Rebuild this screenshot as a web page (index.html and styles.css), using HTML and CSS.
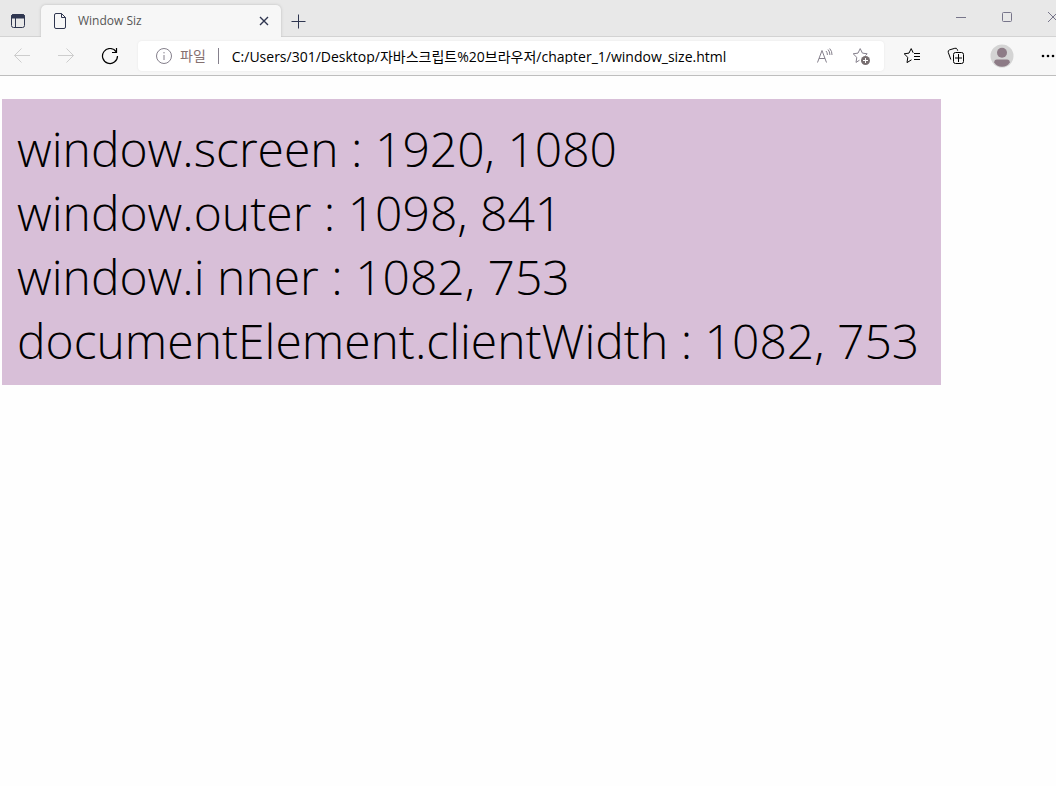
FILE: index.html
```
<!DOCTYPE html>
<html lang="ko">
<head>
  <meta charset="UTF-8">
  <meta name="viewport" content="width=device-width, initial-scale=1.0">
  <title>Window Size</title>
  <link rel="stylesheet" href="styles.css">
</head>
<body>
  <header class="browser">
    <!-- tab strip -->
    <div class="tab-strip">
      <button class="tab-menu" aria-label="Tab actions">
        <svg width="16" height="16" viewBox="0 0 16 16"><rect x="1.5" y="1.5" width="13" height="13" rx="2"/><path d="M1.5 3.5a2 2 0 0 1 2-2h9a2 2 0 0 1 2 2V5h-13z" class="solid"/><path d="M5.5 5v9.5"/></svg>
      </button>
      <div class="tab">
        <svg width="14" height="18" viewBox="0 0 14 18"><path d="M3 1.5h5.5l4 4V15a1.5 1.5 0 0 1-1.5 1.5H3A1.5 1.5 0 0 1 1.5 15V3A1.5 1.5 0 0 1 3 1.5zM8.5 1.5v4h4"/></svg>
        <span class="tab-title">Window Siz</span>
        <button class="tab-close" aria-label="Close tab">
          <svg width="10" height="10" viewBox="0 0 10 10"><path d="M1 1l8 8M9 1L1 9"/></svg>
        </button>
      </div>
      <button class="tab-new" aria-label="New tab">
        <svg width="15" height="15" viewBox="0 0 15 15"><path d="M7.5 .5v14M.5 7.5h14"/></svg>
      </button>
      <div class="window-buttons">
        <button aria-label="Minimize"><svg width="12" height="12" viewBox="0 0 12 12"><path d="M1 6.5h10"/></svg></button>
        <button aria-label="Maximize"><svg width="12" height="12" viewBox="0 0 12 12"><rect x="1.5" y="1.5" width="9" height="9" rx="1"/></svg></button>
        <button aria-label="Close"><svg width="12" height="12" viewBox="0 0 12 12"><path d="M1 1l10 10M11 1L1 11"/></svg></button>
      </div>
    </div>

    <!-- toolbar -->
    <div class="toolbar">
      <button class="tool" aria-label="Back" disabled>
        <svg width="18" height="16" viewBox="0 0 18 16"><path d="M8.5 .5l-7 7 7 7M1.5 7.5H17"/></svg>
      </button>
      <button class="tool" aria-label="Forward" disabled>
        <svg width="18" height="16" viewBox="0 0 18 16"><path d="M9.5 .5l7 7-7 7M16.5 7.5H1"/></svg>
      </button>
      <button class="tool" aria-label="Refresh">
        <svg width="18" height="18" viewBox="0 0 18 18" class="refresh"><path d="M15.2 4.8A7.5 7.5 0 1 0 16.5 9M15.5 1v4.5H11"/></svg>
      </button>
      <div class="address-bar">
        <svg width="18" height="18" viewBox="0 0 18 18"><circle cx="9" cy="9" r="7.5"/><path d="M9 8v5M9 5v1.4"/></svg>
        <label class="scheme" for="address">파일</label>
        <input type="text" id="address" value="C:/Users/301/Desktop/자바스크립트%20브라우저/chapter_1/window_size.html">
        <button aria-label="Read aloud">
          <svg width="18" height="18" viewBox="0 0 18 18"><path d="M1.5 15.5l4.500-12 4.500 12M3 11.500h6M10 4q1.500 1.500 1.400 4M12 2.500q2 2.200 1.900 5.500M13.700 1.500q2.500 2.700 2.300 6.500"/></svg>
        </button>
        <button aria-label="Add to favorites">
          <svg width="18" height="18" viewBox="0 0 18 18"><path d="M7.5 13.200L4 15.400l.8-5L1.200 6.800l4.800-.7L8.200 1.600l2.200 4.500 4.800.7-1.800 1.700"/><circle cx="13.5" cy="13.500" r="4.500" class="plus-dot"/><path d="M13.500 11v5M11 13.500h5" class="plus-sign"/></svg>
        </button>
      </div>
      <button class="tool" aria-label="Favorites">
        <svg width="18" height="18" viewBox="0 0 18 18"><path d="M8.5 12.800L4 15.600l.8-5.200L1.200 6.800l4.800-.7L8.200 1.600l2 4.200M11 6.500h6M11 9.500h6M11 12.500h6"/></svg>
      </button>
      <button class="tool" aria-label="Collections">
        <svg width="18" height="18" viewBox="0 0 18 18"><path d="M3.800 12.500L1.300 5.500a2 2 0 0 1 1.200-2.600l5.300-1.600a2 2 0 0 1 2.500 1.200l.4 1.200"/><rect x="6.5" y="5.5" width="10" height="11" rx="2"/><path d="M11.5 7v8M8 11h7"/></svg>
      </button>
      <button class="tool profile" aria-label="Profile">
        <svg width="24" height="24" viewBox="0 0 24 24"><circle cx="12" cy="12" r="11.5" class="avatar-bg"/><circle cx="12" cy="8.800" r="5" class="avatar"/><path d="M4.200 18.500Q4.200 15.500 7 15.500h10q2.800 0 2.800 3Q17 22.800 12 22.800t-7.800-4.300z" class="avatar"/></svg>
      </button>
      <button class="tool" aria-label="Settings and more">
        <svg width="18" height="18" viewBox="0 0 18 18" class="dots"><circle cx="4" cy="9" r="1.3"/><circle cx="9" cy="9" r="1.3"/><circle cx="14" cy="9" r="1.3"/></svg>
      </button>
    </div>
  </header>

  <main>
    <div class="window-size">
      <div>window.screen : 1920, 1080</div>
      <div>window.outer : 1098, 841</div>
      <div>window.i nner : 1082, 753</div>
      <div>documentElement.clientWidth : 1082, 753</div>
    </div>
  </main>
</body>
</html>
```
FILE: styles.css
```
* {
  box-sizing: border-box;
}

body {
  margin: 0;
  background: #fefefe;
  color: #000;
  font-family: "Open Sans", "Noto Sans CJK KR", sans-serif;
  overflow: hidden;
}

button {
  display: flex;
  align-items: center;
  justify-content: center;
  padding: 0;
  border: none;
  background: none;
  color: inherit;
}

svg {
  flex: none;
  fill: none;
  stroke: currentColor;
}

.tab-strip {
  display: flex;
  align-items: flex-end;
  height: 37px;
  background: #e8e8e8;
  box-shadow: inset 0 -1px #d3d3d3;
  color: #2f3650;
}

.tab-menu {
  width: 36px;
  height: 32px;
}

.solid {
  fill: currentColor;
}

.tab {
  display: flex;
  align-items: center;
  width: 240px;
  height: 32px;
  margin-left: 5px;
  padding: 0 12px;
  border-radius: 5px 5px 0 0;
  background: #f7f7f7;
  box-shadow: 0 0 3px #bbb;
  clip-path: inset(-3px -3px 0);
}

.tab-title {
  flex: 1;
  margin-left: 11px;
  padding-bottom: 1px;
  font-size: 12px;
  line-height: 16px;
  color: #555;
}

.tab-close {
  stroke-width: 1.4;
}

.tab-new {
  width: 34px;
  height: 32px;
}

.window-buttons {
  display: flex;
  align-self: flex-start;
  margin-left: auto;
  margin-right: -20px;
  color: #77758a;
}

.window-buttons button {
  width: 46px;
  height: 34px;
}

.toolbar {
  display: flex;
  align-items: center;
  height: 39px;
  margin-right: -14px;
  border-bottom: 1px solid #bebebe;
  background: #f7f7f7;
}

.tool {
  flex: none;
  width: 44px;
  height: 30px;
}

.tool:disabled {
  color: #cdcdcd;
}

.refresh {
  stroke-width: 1.2;
}

.address-bar {
  display: flex;
  flex: 1;
  align-items: center;
  height: 30px;
  margin: 0 6px;
  padding: 0 5px 0 17px;
  border-radius: 4px;
  background: #fff;
  box-shadow: 0 0 2px #e4e4e4;
  color: #85808c;
}

.scheme {
  margin: 0 12px 0 7px;
  padding-bottom: 1px;
  font-size: 14px;
  line-height: 16px;
  color: #85706f;
}

.address-bar input {
  flex: 1;
  min-width: 0;
  height: 16px;
  padding: 0 0 1px 13px;
  border: none;
  border-left: 1px solid #85808c;
  outline: none;
  background: none;
  font-family: inherit;
  font-size: 14px;
  color: #000;
}

.address-bar button {
  width: 36px;
  height: 30px;
}

.plus-dot {
  fill: #776e70;
  stroke: none;
}

.plus-sign {
  stroke: #fff;
}

.profile {
  width: 48px;
}

.avatar-bg {
  fill: #d4d4d4;
  stroke: none;
}

.avatar {
  fill: #8d7b86;
  stroke: none;
}

.dots {
  fill: #000;
  stroke: none;
}

main {
  padding: 23px 2px;
}

.window-size {
  width: fit-content;
  padding: 18px 22px 12px 15px;
  background: #d8bfd8;
  font-size: 48px;
  font-weight: 300;
  line-height: 64px;
  white-space: nowrap;
}
```
